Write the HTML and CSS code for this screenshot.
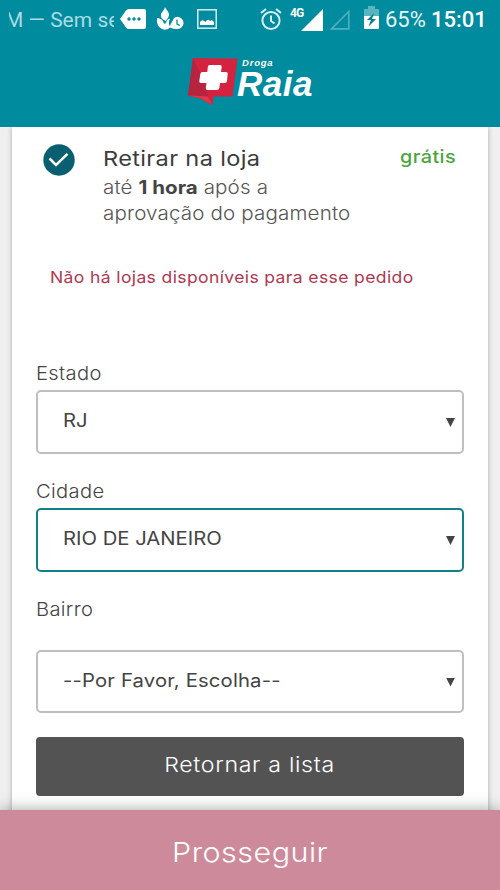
FILE: index.html
```html
<!DOCTYPE html>
<html lang="pt-BR">
<head>
<meta charset="utf-8">
<title>Droga Raia</title>
<link rel="stylesheet" href="styles.css">
</head>
<body>
<header class="header">
  <div class="status">
    <span class="ticker">M — Sem se</span>
    <svg class="ic-msg" width="28" height="20" viewBox="0 0 28 20"><path d="M1 10 7 1.500Q8 0 10 0H25Q27 0 27 2V18Q27 20 25 20H10Q8 20 7 18.500Z" fill="#fff"/><g fill="#008b9e"><circle cx="10" cy="10" r="1.700"/><circle cx="15" cy="10" r="1.700"/><circle cx="20" cy="10" r="1.700"/></g></svg>
    <svg class="ic-drop" width="28" height="24" viewBox="0 0 28 24"><path d="M9 0C10 3 13.500 5 13 8.500Q12.500 11 9.500 14Q4 11 5 7.500C5.500 5 8 4 9 0Z" fill="#fff"/><path d="M1 11Q6 11 7.500 15.500Q9 18 10 15.500Q11 12 14 11.500Q11.500 17 14.500 20Q11 24 6 22Q0 19 1 11Z" fill="#fff"/><path d="M13.500 20Q15 16 17 13Q19 9 23 10Q28 12 27.500 17Q26 22.500 20 22Q15 21.500 13.500 20Z" fill="#fff"/><path d="M21 12.500V17L24 18.500" fill="none" stroke="#008b9e" stroke-width="1.300"/></svg>
    <svg class="ic-img" width="20" height="20" viewBox="0 0 20 20"><rect x=".8" y=".8" width="18.400" height="18.400" fill="none" stroke="#d5edf0" stroke-width="1.500"/><path d="M3 16V13Q5 10 7 12L8.500 13Q11 9 13 12Q15 10 17 13V16Z" fill="#fff"/></svg>
    <svg class="ic-alarm" width="22" height="23" viewBox="0 0 22 23" fill="none" stroke="#d9f0f2" stroke-width="2"><circle cx="11" cy="12.500" r="8.600"/><path d="M1 5 6 1M21 5 16 1M11 7.500V13L14.500 15.500"/></svg>
    <span class="net">4G</span>
    <svg class="ic-sig" width="22" height="22" viewBox="0 0 22 22"><path d="M22 0V22H0Z" fill="#fff"/></svg>
    <svg class="ic-sig2" width="21" height="21" viewBox="0 0 21 21"><path d="M19.800 2.500V19.800H2.500Z" fill="none" stroke="#4fb0bc" stroke-width="1.700"/></svg>
    <svg class="ic-bat" width="15" height="24" viewBox="0 0 15 24"><path d="M4 0H11V3H15V12H0V3H4Z" fill="#59b5c0"/><path d="M0 10H15V22Q15 23 14 23H1Q0 23 0 22Z" fill="#fff"/><path d="M10 7 3 14H7L4.500 20.500 12 13H8Z" fill="#007f91"/></svg>
    <span class="pct">65%</span>
    <span class="clock">15:01</span>
  </div>
  <div class="logo">
    <svg width="52" height="48" viewBox="0 0 52 48"><path d="M6 1 50.500 1.500 45.500 39.500 26.500 39.500 25.500 48 13 41 1 38.500Z" fill="#d3233f"/><path d="M6 1 13 15 21 38 24.500 47.500 13 41 1 38.500Z" fill="#b72440"/><path d="M1 38.500 21 39.500 25.500 48 13 41Z" fill="#ee3048"/><path d="M22.500 8H33Q35 8 34.700 10L34 15H39Q41 15 40.700 17L40 24Q39.700 26 38 26H33L32.300 31Q32 33 30 33H20.500Q18.500 33 18.800 31L19.500 26H14Q12 26 12.300 24L13.300 17Q13.600 15 15.500 15H20.300L20.800 10Q21 8 22.500 8Z" fill="#fff"/></svg>
    <div class="brand"><span class="brand-top">Droga</span><span class="brand-name">Raia</span></div>
  </div>
</header>
<main class="page">
  <section class="card">
    <div class="option">
      <svg class="check" width="32" height="32" viewBox="0 0 32 32"><circle cx="16" cy="16" r="15.700" fill="#085f6f"/><path d="M6.500 14.500 13 21 24.500 9.800" fill="none" stroke="#fff" stroke-width="2.500"/></svg>
      <div class="desc">
        <h1 class="title">Retirar na loja</h1>
        <p class="sub"><span class="line">até <b>1 hora</b> após a</span><span class="line">aprovação do pagamento</span></p>
      </div>
      <span class="price">grátis</span>
    </div>
    <p class="error">Não há lojas disponíveis para esse pedido</p>
    <div class="label estado">Estado</div>
    <div class="select"><span class="value">RJ</span><i class="arrow"></i></div>
    <div class="label cidade">Cidade</div>
    <div class="select active"><span class="value">RIO DE JANEIRO</span><i class="arrow"></i></div>
    <div class="label bairro">Bairro</div>
    <div class="select last"><span class="value pick">--Por Favor, Escolha--</span><i class="arrow"></i></div>
    <button class="back"><span class="wide">Retornar a lista</span></button>
  </section>
</main>
<footer class="next"><span class="wide">Prosseguir</span></footer>
</body>
</html>
```
FILE: styles.css
```css
* { box-sizing: border-box; margin: 0; padding: 0; }
body { width: 500px; height: 890px; overflow: hidden; display: flex; flex-direction: column; background: #f0f0f0; font-family: Inter, "Noto Sans", sans-serif; color: #555; white-space: nowrap; }
svg { display: block; flex: none; }
.header { position: relative; z-index: 1; height: 127px; flex: none; background: #008b9e; }
.status { height: 40px; display: flex; align-items: flex-start; padding-left: 9px; font-family: Roboto, sans-serif; }
.ticker { width: 105px; height: 40px; overflow: hidden; text-indent: -4px; font-size: 21px; line-height: 40px; color: #a9dce2; }
.ic-msg { margin: 9px 0 0 5px; }
.ic-drop { margin: 7px 0 0 9px; }
.ic-img { margin: 9px 0 0 13px; }
.ic-alarm { margin: 8px 0 0 43px; }
.net { width: 14px; margin: 6px 0 0 8px; font-size: 12px; line-height: 14px; font-weight: 700; color: #fff; letter-spacing: -1px; }
.ic-sig { margin: 9px 0 0 -3px; }
.ic-sig2 { margin: 9px 0 0 6px; }
.ic-bat { margin: 6px 0 0 14px; }
.pct, .clock { color: #e8f6f7; font-size: 22px; line-height: 40px; }
.pct { width: 41px; margin-left: 6px; }
.clock { margin-left: 5px; font-weight: 500; color: #fff; }
.logo { display: flex; padding: 17px 0 0 187px; }
.brand { display: flex; flex-direction: column; font-family: "Liberation Sans", sans-serif; font-weight: 700; font-style: italic; color: #fff; }
.brand-top { margin-left: 3px; font-size: 9.5px; line-height: 11px; letter-spacing: .8px; }
.brand-name { margin-left: -2px; font-size: 35px; line-height: 31px; letter-spacing: .5px; }
.page { flex: 1; min-height: 0; padding: 0 12px; }
.card { height: 690px; padding: 17px 24px 0; background: #fff; box-shadow: 0 0 5px rgba(0,0,0,.3); }
.option { display: flex; }
.check { margin: 0 0 0 7px; }
.desc { width: 260px; margin-left: 28px; }
.title { font-size: 20.5px; line-height: 29px; font-weight: 400; color: #3c3c3c; letter-spacing: .3px; transform: scaleX(1.15); transform-origin: 0 0; }
.sub { margin-top: 1px; font-size: 18.5px; font-weight: 300; transform: scaleX(1.11); transform-origin: 0 0; }
.sub b { font-weight: 700; color: #444; letter-spacing: 0; }
.line { display: block; line-height: 26px; letter-spacing: .15px; }
.price { margin-left: 37px; font-size: 18px; line-height: 26px; font-weight: 450; color: #4ca43f; letter-spacing: .4px; transform: scaleX(1.1); transform-origin: 0 0; }
.error { width: 380px; margin: 38px 0 0 14px; height: 26px; font-size: 16.5px; line-height: 26px; font-weight: 430; color: #ae3852; letter-spacing: .35px; transform: scaleX(1.063); transform-origin: 0 0; }
.label { height: 26px; font-size: 18.5px; line-height: 26px; font-weight: 300; color: #444; letter-spacing: .3px; transform: scaleX(1.09); transform-origin: 0 0; }
.estado { margin-top: 70px; }
.cidade { margin-top: 24px; }
.bairro { margin-top: 24px; }
.select { height: 64px; margin-top: 4px; border: 2px solid #bfbfbf; border-radius: 5px; display: flex; align-items: center; justify-content: space-between; padding: 0 7px 3px 25px; font-size: 18px; font-weight: 430; color: #444; }
.value { transform: scaleX(1.125); transform-origin: 0 0; }
.pick { letter-spacing: .15px; }
.active { border-color: #137f87; }
.last { margin-top: 28px; height: 63px; }
.arrow { width: 9px; height: 9px; margin-top: 4px; background: #444; clip-path: polygon(0 0, 100% 0, 50% 100%); }
.wide { display: inline-block; transform: scaleX(1.13); }
.back { display: block; width: 100%; height: 59px; margin-top: 24px; padding-bottom: 4px; border: 0; border-radius: 4px; background: #535353; color: #fff; font: 300 20.5px Inter, sans-serif; letter-spacing: .6px; }
.next { position: relative; z-index: 1; height: 80px; flex: none; background: #cd8a9b; box-shadow: 0 -1px 14px rgba(40,60,45,.4); color: #fff; text-align: center; font-size: 27px; line-height: 86px; font-weight: 300; letter-spacing: .4px; }
```
